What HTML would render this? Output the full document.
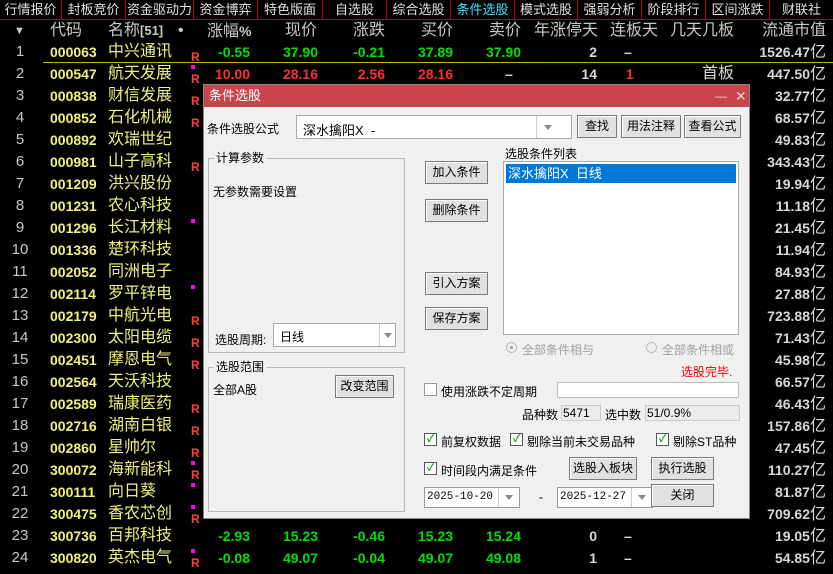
<!DOCTYPE html>
<html><head><meta charset="utf-8"><style>
*{margin:0;padding:0;box-sizing:border-box}
body{width:833px;height:569px;background:#000;overflow:hidden;position:relative;font-family:"Liberation Sans","Noto Sans CJK SC",sans-serif}
.tabs{position:absolute;left:0;top:0;width:833px;height:20px;border-bottom:1px solid #c00000;display:flex}
.tabs div{height:19px;line-height:19px;color:#e0e0e0;font-size:13px;text-align:center;border-right:1px solid #c00000;flex:none;white-space:nowrap;overflow:hidden}
.hd{position:absolute;top:20px;height:22px;line-height:22px;font-size:16px;color:#c8c8c8;white-space:nowrap}
.r{position:absolute;left:0;width:833px;height:22px;font-size:14px;font-weight:bold;line-height:22px}
.r span{position:absolute;top:0;white-space:nowrap}
.n{color:#c8c8c8;font-weight:normal;font-size:15px;width:40px;text-align:center;left:0}
.cd{left:50px;color:#f0f080}
.nm{left:108px;color:#f0f080;font-weight:normal;font-size:16px}
.R{left:191px;color:#ff4040;font-size:12px;top:5px!important}
.d{left:191px;top:2px!important;width:4px;height:4px;background:#ff00ff}
.v{right:7px;color:#d8d8d8}
.v i{font-style:normal;font-weight:normal;font-size:16px}
.g{color:#00e000}.rd{color:#ff3030}.w{color:#d8d8d8}
.dlg{position:absolute;left:203px;top:84px;width:547px;height:435px;background:#f0f0f0;z-index:5;font-size:12px;color:#000;border:1px solid #888}
.dlg *{position:absolute;white-space:nowrap}
.tt{left:0;top:0;width:545px;height:22px;background:#c8434a;color:#fff;line-height:22px;padding-left:5px;font-size:13px}
.b{background:#e1e1e1;border:1px solid #7a7a7a;text-align:center;line-height:21px;box-shadow:inset 1px 1px 0 #fff}
.wb{background:#fff;border:1px solid #aaa}
.gb{border:1px solid #b8b8b8}
.lg{background:#f0f0f0;padding:0 2px;top:-9px;left:5px;line-height:16px}
.ar{width:0;height:0;border-left:4px solid transparent;border-right:4px solid transparent;border-top:5px solid #888}
.cb{width:13px;height:13px;background:#fff;border:1px solid #555;color:#1a9a1a;font-size:10px;line-height:11px;text-align:center;font-weight:bold}
</style></head><body>
<div class="tabs">
<div style="width:62px">行情报价</div><div style="width:64px">封板竞价</div><div style="width:68px">资金驱动力</div><div style="width:64px">资金博弈</div><div style="width:65px">特色版面</div><div style="width:64px">自选股</div><div style="width:64px">综合选股</div><div style="width:64px;color:#40e0ff">条件选股</div><div style="width:63px">模式选股</div><div style="width:64px">强弱分析</div><div style="width:64px">阶段排行</div><div style="width:64px">区间涨跌</div><div style="width:63px;border:none">财联社</div>
</div>
<div class="hd" style="left:14px;color:#c8c8c8;font-size:11px">▼</div>
<div class="hd" style="left:50px">代码</div>
<div class="hd" style="left:108px">名称<b style="font-size:13px">[51]</b></div>
<div class="hd" style="left:178px">•</div>
<div class="hd" style="left:207px">涨幅<b style="font-size:14px">%</b></div>
<div class="hd" style="left:285px">现价</div>
<div class="hd" style="left:353px">涨跌</div>
<div class="hd" style="left:421px">买价</div>
<div class="hd" style="left:489px">卖价</div>
<div class="hd" style="left:534px">年涨停天</div>
<div class="hd" style="left:610px">连板天</div>
<div class="hd" style="left:670px">几天几板</div>
<div class="hd" style="left:762px">流通市值</div>
<div style="position:absolute;left:43px;top:62px;width:790px;height:1px;background:#c8b400"></div>

<div class="r" style="top:41px"><span class="n">1</span><span class="cd">000063</span><span class="nm">中兴通讯</span><span class="R">R</span><span class="g" style="right:583px">-0.55</span><span class="g" style="right:515px">37.90</span><span class="g" style="right:448px">-0.21</span><span class="g" style="right:380px">37.89</span><span class="g" style="right:312px">37.90</span><span class="w" style="right:236px">2</span><span class="w" style="left:624px">–</span><span class="v">1526.47<i>亿</i></span></div>
<div class="r" style="top:63px"><span class="n">2</span><span class="cd">000547</span><span class="nm">航天发展</span><span class="d"></span><span class="R">R</span><span class="rd" style="right:583px">10.00</span><span class="rd" style="right:515px">28.16</span><span class="rd" style="right:448px">2.56</span><span class="rd" style="right:380px">28.16</span><span class="w" style="left:505px">–</span><span class="w" style="right:236px">14</span><span class="rd" style="left:626px">1</span><span class="w" style="left:702px;font-weight:normal;font-size:16px">首板</span><span class="v">447.50<i>亿</i></span></div>
<div class="r" style="top:85px"><span class="n">3</span><span class="cd">000838</span><span class="nm">财信发展</span><span class="R">R</span><span class="v">32.77<i>亿</i></span></div>
<div class="r" style="top:107px"><span class="n">4</span><span class="cd">000852</span><span class="nm">石化机械</span><span class="R">R</span><span class="v">68.57<i>亿</i></span></div>
<div class="r" style="top:129px"><span class="n">5</span><span class="cd">000892</span><span class="nm">欢瑞世纪</span><span class="v">49.83<i>亿</i></span></div>
<div class="r" style="top:151px"><span class="n">6</span><span class="cd">000981</span><span class="nm">山子高科</span><span class="R">R</span><span class="v">343.43<i>亿</i></span></div>
<div class="r" style="top:173px"><span class="n">7</span><span class="cd">001209</span><span class="nm">洪兴股份</span><span class="v">19.94<i>亿</i></span></div>
<div class="r" style="top:195px"><span class="n">8</span><span class="cd">001231</span><span class="nm">农心科技</span><span class="v">11.18<i>亿</i></span></div>
<div class="r" style="top:217px"><span class="n">9</span><span class="cd">001296</span><span class="nm">长江材料</span><span class="d"></span><span class="v">21.45<i>亿</i></span></div>
<div class="r" style="top:239px"><span class="n">10</span><span class="cd">001336</span><span class="nm">楚环科技</span><span class="v">11.94<i>亿</i></span></div>
<div class="r" style="top:261px"><span class="n">11</span><span class="cd">002052</span><span class="nm">同洲电子</span><span class="v">84.93<i>亿</i></span></div>
<div class="r" style="top:283px"><span class="n">12</span><span class="cd">002114</span><span class="nm">罗平锌电</span><span class="d"></span><span class="v">27.88<i>亿</i></span></div>
<div class="r" style="top:305px"><span class="n">13</span><span class="cd">002179</span><span class="nm">中航光电</span><span class="R">R</span><span class="v">723.88<i>亿</i></span></div>
<div class="r" style="top:327px"><span class="n">14</span><span class="cd">002300</span><span class="nm">太阳电缆</span><span class="R">R</span><span class="v">71.43<i>亿</i></span></div>
<div class="r" style="top:349px"><span class="n">15</span><span class="cd">002451</span><span class="nm">摩恩电气</span><span class="R">R</span><span class="v">45.98<i>亿</i></span></div>
<div class="r" style="top:371px"><span class="n">16</span><span class="cd">002564</span><span class="nm">天沃科技</span><span class="v">66.57<i>亿</i></span></div>
<div class="r" style="top:393px"><span class="n">17</span><span class="cd">002589</span><span class="nm">瑞康医药</span><span class="R">R</span><span class="v">46.43<i>亿</i></span></div>
<div class="r" style="top:415px"><span class="n">18</span><span class="cd">002716</span><span class="nm">湖南白银</span><span class="R">R</span><span class="v">157.86<i>亿</i></span></div>
<div class="r" style="top:437px"><span class="n">19</span><span class="cd">002860</span><span class="nm">星帅尔</span><span class="R">R</span><span class="v">47.45<i>亿</i></span></div>
<div class="r" style="top:459px"><span class="n">20</span><span class="cd">300072</span><span class="nm">海新能科</span><span class="d"></span><span class="R">R</span><span class="v">110.27<i>亿</i></span></div>
<div class="r" style="top:481px"><span class="n">21</span><span class="cd">300111</span><span class="nm">向日葵</span><span class="d"></span><span class="v">81.87<i>亿</i></span></div>
<div class="r" style="top:503px"><span class="n">22</span><span class="cd">300475</span><span class="nm">香农芯创</span><span class="d"></span><span class="R">R</span><span class="v">709.62<i>亿</i></span></div>
<div class="r" style="top:525px"><span class="n">23</span><span class="cd">300736</span><span class="nm">百邦科技</span><span class="g" style="right:583px">-2.93</span><span class="g" style="right:515px">15.23</span><span class="g" style="right:448px">-0.46</span><span class="g" style="right:380px">15.23</span><span class="g" style="right:312px">15.24</span><span class="w" style="right:236px">0</span><span class="w" style="left:624px">–</span><span class="v">19.05<i>亿</i></span></div>
<div class="r" style="top:547px"><span class="n">24</span><span class="cd">300820</span><span class="nm">英杰电气</span><span class="d"></span><span class="R">R</span><span class="g" style="right:583px">-0.08</span><span class="g" style="right:515px">49.07</span><span class="g" style="right:448px">-0.04</span><span class="g" style="right:380px">49.07</span><span class="g" style="right:312px">49.08</span><span class="w" style="right:236px">1</span><span class="w" style="left:624px">–</span><span class="v">54.85<i>亿</i></span></div>

<div class="dlg">
<div class="tt">条件选股</div>
<div style="left:511px;top:4px;color:#f4d0d0;font-size:12px">—</div>
<div style="left:531px;top:3px;color:#f4d0d0;font-size:14px">✕</div>
<div style="left:3px;top:35px">条件选股公式</div>
<div class="wb" style="left:92px;top:30px;width:276px;height:24px"></div>
<div style="left:99px;top:35px;font-size:13px">深水擒阳X&nbsp;&nbsp;-</div>
<div style="left:332px;top:31px;width:1px;height:22px;background:#ccc"></div>
<div class="ar" style="left:340px;top:40px"></div>
<div class="b" style="left:373px;top:30px;width:40px;height:23px">查找</div>
<div class="b" style="left:417px;top:30px;width:60px;height:23px">用法注释</div>
<div class="b" style="left:480px;top:30px;width:57px;height:23px">查看公式</div>
<div class="gb" style="left:4px;top:73px;width:197px;height:195px"><div class="lg">计算参数</div>
<div style="left:4px;top:24px">无参数需要设置</div>
<div style="left:6px;top:172px">选股周期:</div>
<div class="wb" style="left:64px;top:164px;width:123px;height:24px"></div>
<div style="left:71px;top:169px">日线</div>
<div style="left:170px;top:165px;width:1px;height:22px;background:#ccc"></div>
<div class="ar" style="left:175px;top:174px"></div>
</div>
<div class="gb" style="left:4px;top:282px;width:197px;height:145px"><div class="lg">选股范围</div>
<div style="left:4px;top:13px">全部A股</div>
<div class="b" style="left:126px;top:7px;width:59px;height:23px">改变范围</div>
</div>
<div class="b" style="left:221px;top:76px;width:63px;height:23px">加入条件</div>
<div class="b" style="left:221px;top:114px;width:63px;height:23px">删除条件</div>
<div class="b" style="left:221px;top:187px;width:63px;height:23px">引入方案</div>
<div class="b" style="left:221px;top:222px;width:63px;height:23px">保存方案</div>
<div style="left:301px;top:60px">选股条件列表</div>
<div class="wb" style="left:299px;top:76px;width:236px;height:174px"></div>
<div style="left:302px;top:79px;width:230px;height:19px;background:#0078d7;color:#fff;line-height:19px;padding-left:2px;font-size:13px">深水擒阳X&nbsp;&nbsp;日线</div>
<div style="left:302px;top:257px;width:11px;height:11px;border-radius:50%;border:1px solid #bbb;background:#f0f0f0"></div>
<div style="left:306px;top:261px;width:3px;height:3px;border-radius:50%;background:#999"></div>
<div style="left:318px;top:256px;color:#a0a0a0">全部条件相与</div>
<div style="left:442px;top:257px;width:11px;height:11px;border-radius:50%;border:1px solid #bbb;background:#f0f0f0"></div>
<div style="left:458px;top:256px;color:#a0a0a0">全部条件相或</div>
<div style="left:477px;top:278px;color:#ff0000">选股完毕.</div>
<div class="cb" style="left:220px;top:298px;border-color:#999"></div>
<div style="left:237px;top:298px">使用涨跌不定周期</div>
<div class="wb" style="left:353px;top:297px;width:182px;height:16px;border-color:#bbb"></div>
<div style="left:318px;top:321px">品种数</div>
<div style="left:357px;top:320px;width:40px;height:16px;border:1px solid #ccc;background:#ececec;line-height:14px;padding-left:1px">5471</div>
<div style="left:401px;top:321px">选中数</div>
<div style="left:441px;top:320px;width:95px;height:16px;border:1px solid #ccc;background:#ececec;line-height:14px;padding-left:1px">51/0.9%</div>
<div class="cb" style="left:220px;top:348px">✓</div><div style="left:237px;top:348px">前复权数据</div>
<div class="cb" style="left:306px;top:348px">✓</div><div style="left:323px;top:348px">剔除当前未交易品种</div>
<div class="cb" style="left:452px;top:348px">✓</div><div style="left:469px;top:348px">剔除ST品种</div>
<div class="cb" style="left:220px;top:377px">✓</div><div style="left:237px;top:377px">时间段内满足条件</div>
<div class="b" style="left:365px;top:372px;width:68px;height:23px">选股入板块</div>
<div class="b" style="left:447px;top:372px;width:63px;height:23px">执行选股</div>
<div class="wb" style="left:220px;top:402px;width:96px;height:21px;border-color:#999"></div>
<div style="left:223px;top:406px;font-family:'Liberation Mono',monospace;font-size:11px">2025-10-20</div>
<div style="left:294px;top:403px;width:1px;height:19px;background:#ccc"></div>
<div class="ar" style="left:301px;top:410px"></div>
<div style="left:335px;top:405px">-</div>
<div class="wb" style="left:353px;top:402px;width:96px;height:21px;border-color:#999"></div>
<div style="left:356px;top:406px;font-family:'Liberation Mono',monospace;font-size:11px">2025-12-27</div>
<div style="left:427px;top:403px;width:1px;height:19px;background:#ccc"></div>
<div class="ar" style="left:434px;top:410px"></div>
<div class="b" style="left:447px;top:399px;width:63px;height:23px">关闭</div>
</div>
</body></html>
